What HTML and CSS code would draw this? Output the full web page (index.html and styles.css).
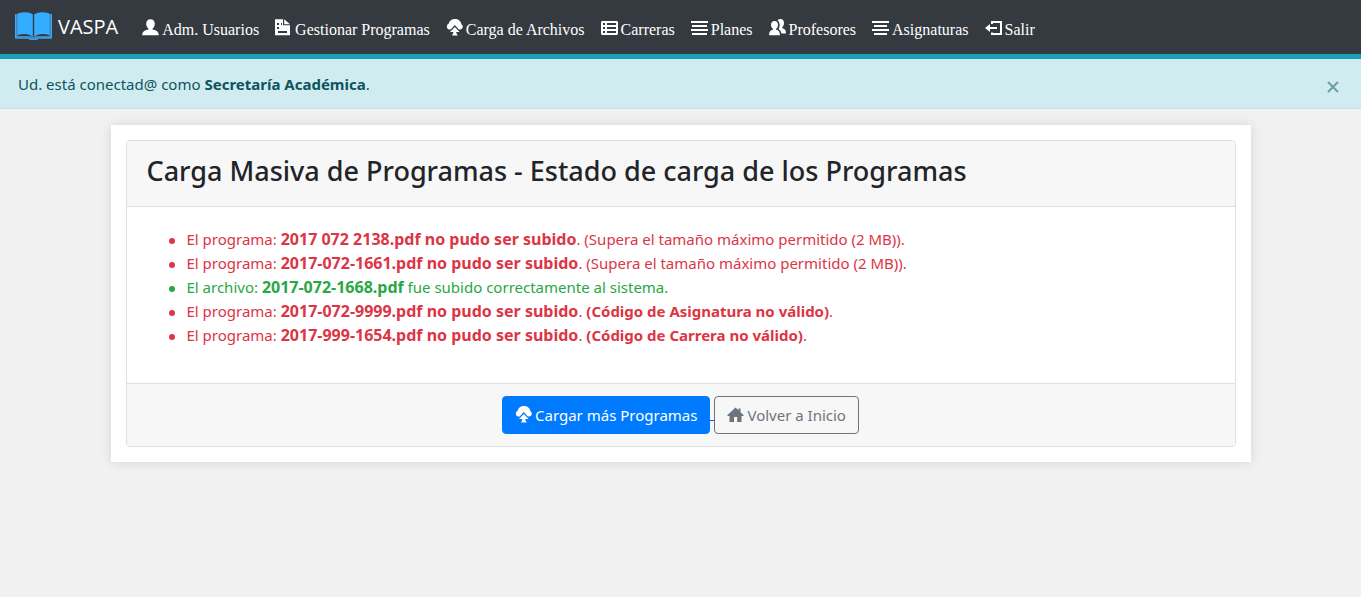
FILE: index.html
```html
<!DOCTYPE html>
<html lang="es">
<head>
<meta charset="utf-8">
<meta name="viewport" content="width=device-width, initial-scale=1">
<title>VASPA - Carga Masiva de Programas</title>
<link rel="stylesheet" href="styles.css">
</head>
<body>
<svg class="sprite" aria-hidden="true">
  <symbol id="i-cloud" viewBox="0 0 17 17"><path d="M2.800 10.500A3.100 3.100 0 0 1 2.600 4.800C3.300 2 5.800 0 8.800 0c3.600 0 6.200 2 6.600 5.200A2.900 2.900 0 0 1 14.500 10.500h-1.700L8.800 6 4.700 10.500z"/><path d="M8.800 8 13.600 13H10.300V14l1.500 2.500H6l1.300-2.500v-1H4z"/></symbol>
</svg>
<nav class="navbar">
  <a class="brand" href="#">
    <svg class="brand-logo" viewBox="0 0 37 29" aria-hidden="true">
      <path fill="#4388b5" d="M0 2h3v22h11q3 0 4.500 1Q20 24 23 24h11V2h3v24.500H23V28h-9v-1.500H0z"/>
      <path fill="#33adff" d="M2.500 1.500Q12-1.500 17.800 2.200V25Q13 20.500 2.500 23zM34.500 1.500Q25-1.500 19.200 2.200V25q4.800-4.500 15.300-2z"/>
      <path fill="none" stroke="#33adff" d="M.5 2v24h14q.5 1.500 4 1.500t4-1.500h14V2"/>
    </svg>
    <span>VASPA</span>
  </a>
  <a class="nav-link" href="#"><svg class="icon" viewBox="0 0 17 17" aria-hidden="true"><path d="M8.500.3c2.700 0 4.300 1.900 4.300 4.500 0 2-.9 4-2.300 4.900v.8c3 .7 6.300 1.500 6.300 5.700H.2C.2 12 3.500 11.200 6.500 10.500v-.8C5.100 8.800 4.200 6.800 4.200 4.800 4.200 2.200 5.800.3 8.500.3z"/></svg>Adm. Usuarios</a>
  <a class="nav-link" href="#"><svg class="icon" viewBox="0 0 17 17" aria-hidden="true"><path fill-rule="evenodd" d="M0 .3h8v6h7v10H0zM2 4v2h2V4zM2 8v2h2V8zm4-4v2h1V4zM3 12v2h9v-2z"/><path d="M9.200.3 15 5.300H9.200z"/></svg>Gestionar Programas</a>
  <a class="nav-link" href="#"><svg class="icon" aria-hidden="true"><use href="#i-cloud"/></svg>Carga de Archivos</a>
  <a class="nav-link" href="#"><svg class="icon" viewBox="0 0 17 17" aria-hidden="true"><path fill-rule="evenodd" d="M1 2h15l1 1v12l-1 1H1l-1-1V3zM2 4v2h2V4zm4 0v2h9V4zM2 8v2h2V8zm4 0v2h9V8zM2 12v2h2v-2zm4 0v2h9v-2z"/></svg>Carreras</a>
  <a class="nav-link" href="#"><svg class="icon" viewBox="0 0 17 17" aria-hidden="true"><path d="M0 2h17v2H0zM1 6h15v2H1zM0 10h17v2H0zM1 14h15v2H1z"/></svg>Planes</a>
  <a class="nav-link" href="#"><svg class="icon" viewBox="0 0 17 17" aria-hidden="true"><path d="M5.500 2C7.700 2 9 3.500 9 5.700c0 1.800-.8 3.200-1.800 4v1c2.300.5 3.800 1.900 3.800 5.500H0c0-3.600 1.600-5 3.900-5.500v-1C2.900 8.900 2 7.500 2 5.700 2 3.500 3.400 2 5.500 2z"/><path d="M8.500 1.200C9.300.4 10.300 0 11.400 0 13.600 0 15 1.600 15 3.900c0 1.800-.7 3.300-1.700 4.100v1.300c2.500.6 3.700 1.800 3.700 5.200h-4.600c-.3-2-1.200-3.200-2.600-3.900v-.8c1.500-2.800 1.200-6.500-1.300-8.600z"/></svg>Profesores</a>
  <a class="nav-link" href="#"><svg class="icon" viewBox="0 0 17 17" aria-hidden="true"><path d="M0 2h17v2H0zM2 6h13v2H2zM0 10h17v2H0zM2 14h13v2H2z"/></svg>Asignaturas</a>
  <a class="nav-link" href="#"><svg class="icon" viewBox="0 0 17 17" aria-hidden="true"><path d="M6 2h11v14H6v-2.500h2v.5h7V4H8v1H6z"/><path d="M0 9l5-4v3h7v2H5v3z"/></svg>Salir</a>
</nav>

<div class="alert" role="alert">
  <p class="alert-text">Ud. está conectad@ como <strong>Secretaría Académica</strong>.</p>
  <button class="alert-close" type="button" aria-label="Cerrar"><svg viewBox="0 0 12 12" aria-hidden="true"><path d="M1 1l10 10m0-10L1 11"/></svg></button>
</div>

<main class="container">
  <section class="card">
    <header class="card-header"><h1 class="title">Carga Masiva de Programas - Estado de carga de los Programas</h1></header>
    <div class="card-body">
      <ul class="results">
        <li class="error">El programa: <strong class="file">2017 072 2138.pdf no pudo ser subido</strong>. (Supera el tamaño máximo permitido (2 MB)).</li>
        <li class="error">El programa: <strong class="file">2017-072-1661.pdf no pudo ser subido</strong>. (Supera el tamaño máximo permitido (2 MB)).</li>
        <li class="success">El archivo: <strong class="file">2017-072-1668.pdf</strong> fue subido correctamente al sistema.</li>
        <li class="error">El programa: <strong class="file">2017-072-9999.pdf no pudo ser subido</strong>. <strong>(Código de Asignatura no válido)</strong>.</li>
        <li class="error">El programa: <strong class="file">2017-999-1654.pdf no pudo ser subido</strong>. <strong>(Código de Carrera no válido)</strong>.</li>
      </ul>
    </div>
    <footer class="card-footer">
      <a class="btn btn-primary" href="#"><svg class="icon" aria-hidden="true"><use href="#i-cloud"/></svg>Cargar más Programas</a>
      <span class="link-gap"></span>
      <a class="btn btn-outline" href="#"><svg class="icon" viewBox="0 0 17 17" aria-hidden="true"><path d="M8.500 1.500 11.500 4.300V2.500h2v3.700L16.500 9v1H14.500v6H10.200V11H7v5H2.500v-6H.5V9z"/></svg>Volver a Inicio</a>
    </footer>
  </section>
</main>
</body>
</html>
```
FILE: styles.css
```css
* { box-sizing: border-box; }

body {
  margin: 0;
  background: #f1f1f1;
  color: #212529;
  font: 15px/24px "Noto Sans", "Open Sans", sans-serif;
}

.sprite { display: none; }

.icon {
  width: 17px;
  height: 17px;
  flex: none;
  fill: currentColor;
}

.navbar {
  display: flex;
  align-items: center;
  height: 59px;
  padding: 0 15px;
  background: #343a40;
  border-bottom: 5px solid #17a2b8;
}

.brand {
  display: flex;
  align-items: center;
  gap: 6px;
  margin-right: 16px;
  color: #fff;
  font-family: "Open Sans", sans-serif;
  font-size: 20px;
  text-decoration: none;
}

.brand-logo { width: 37px; height: 29px; margin-bottom: 2px; }

.nav-link {
  display: flex;
  align-items: center;
  gap: 3px;
  padding: 6px 8px 0;
  color: #fff;
  font: 16px/24px "Liberation Serif", serif;
  text-decoration: none;
  white-space: nowrap;
}

.nav-link .icon { margin-bottom: 5px; }

.alert {
  display: flex;
  align-items: center;
  justify-content: space-between;
  height: 50px;
  padding: 0 20px 0 18px;
  background: #d1ecf1;
  border-bottom: 1px solid #bee5eb;
  color: #0c5460;
}

.alert-text { margin: 0; }

.alert-close {
  display: flex;
  margin-top: 6px;
  padding: 2px;
  border: 0;
  background: none;
}

.alert-close svg {
  width: 12px;
  height: 12px;
  fill: none;
  stroke: #6b9fa8;
  stroke-width: 2;
}

.container {
  max-width: 1140px;
  margin: 16px auto;
  padding: 15px;
  background: #fff;
  box-shadow: 0 0 10px rgba(0, 0, 0, 0.12);
}

.card {
  overflow: hidden;
  border: 1px solid #dfdfdf;
  border-radius: 4px;
}

.card-header {
  padding: 13px 20px 18px;
  background: #f7f7f7;
  border-bottom: 1px solid #dfdfdf;
}

.title {
  margin: 0;
  font-size: 27px;
  font-weight: 500;
  line-height: 34px;
}

.card-body { padding: 20px 20px 36px; }

.results {
  margin: 0;
  padding-left: 40px;
  list-style: none;
}

.results li::before {
  content: "";
  display: inline-block;
  width: 6px;
  height: 6px;
  margin: 0 12px 0 -18px;
  border-radius: 50%;
  background: currentColor;
  vertical-align: middle;
}

.file { font-size: 16px; line-height: 1; }
.error { color: #dc3545; }
.success { color: #28a745; }

.card-footer {
  display: flex;
  justify-content: center;
  padding: 12px 20px;
  background: #f7f7f7;
  border-top: 1px solid #dfdfdf;
}

.btn {
  display: flex;
  align-items: center;
  gap: 3px;
  padding: 6px 12px;
  border: 1px solid;
  border-radius: 4px;
  text-decoration: none;
}

.btn .icon { margin-bottom: 1px; }

.btn-primary {
  background: #007bff;
  border-color: #007bff;
  color: #fff;
}

.btn-outline {
  border-color: #6c757d;
  color: #6c757d;
}

.link-gap {
  width: 4px;
  height: 25px;
  border-bottom: 1px solid #0056b3;
}
```
